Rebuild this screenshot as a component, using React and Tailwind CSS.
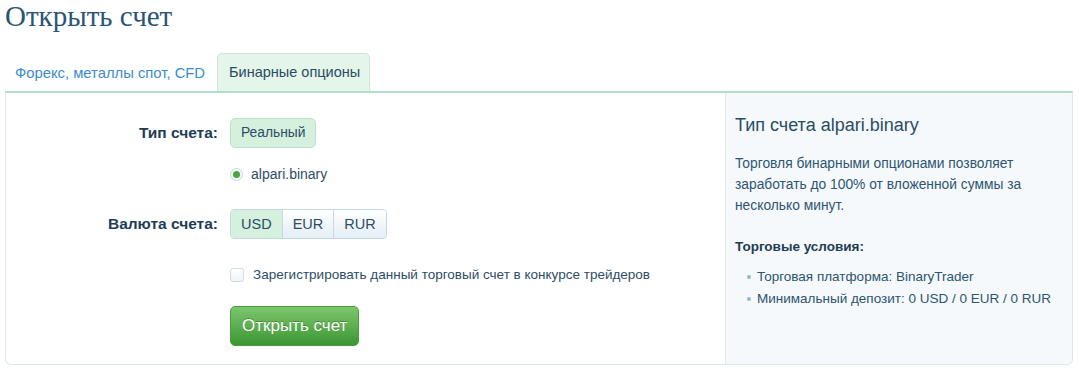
import React, { useState } from 'react';

// --- SMALL PIECES ---
const Radio = () => (
  <span className="w-[13px] h-[13px] rounded-full border border-[#c8d6de] bg-[#f4f8fa] flex items-center justify-center">
    <span className="w-[7px] h-[7px] rounded-full bg-[#4ea340]"></span>
  </span>
);

const Segment = ({ items, value, onChange }) => (
  <div className="flex h-[30px] rounded-[4px] border border-[#c6d9e3] overflow-hidden">
    {items.map((it, i) => (
      <button
        key={it}
        onClick={() => onChange(it)}
        className={
          (value === it
            ? 'bg-[#d5f0dc] '
            : 'bg-gradient-to-b from-[#ffffff] to-[#e3eef4] ') +
          (i > 0 ? 'border-l border-[#c6d9e3] ' : '') +
          'px-[10px] text-[14.5px] text-[#2d4d66] leading-none'
        }
      >
        {it}
      </button>
    ))}
  </div>
);

export default function App() {
  const [currency, setCurrency] = useState('USD');
  const [contest, setContest] = useState(false);

  return (
    <div className="w-[1079px] h-[371px] bg-white overflow-hidden pl-[5px] pr-[6px]" style={{ fontFamily: '"Liberation Sans", Arial, sans-serif' }}>
      {/* Title */}
      <h1 className="text-[29px] leading-[30px] pt-[1px] text-[#2b5576]" style={{ fontFamily: '"Liberation Serif", "Times New Roman", serif' }}>
        Открыть счет
      </h1>

      {/* Tabs */}
      <div className="flex items-end mt-[22px] h-[38px]">
        <div className="pl-[10px] pr-[12px] h-[36px] flex items-center text-[14.8px] text-[#3b8ccc]">
          Форекс, металлы спот, CFD
        </div>
        <div className="h-[38px] pl-[11px] pr-[9px] flex items-center text-[14.5px] text-[#2c4b63] bg-[#e4f5e9] border border-b-0 border-[#cbe8d5] rounded-t-[5px]">
          Бинарные опционы
        </div>
      </div>

      {/* Panel */}
      <div className="flex h-[274px] border-t-2 border-t-[#b4dccd] border-x border-b border-[#dbe8ee] rounded-b-[6px] overflow-hidden">
        {/* Form */}
        <div className="w-[719px] pt-[25px]">
          <div className="grid grid-cols-[212px_1fr] gap-x-[12px] items-center">
            <div className="text-right text-[15.5px] font-bold text-[#1e3c55]">Тип счета:</div>
            <div>
              <div className="inline-flex h-[30px] items-center px-[10px] rounded-[5px] bg-[#d5f0dc] border border-[#bde0c8] text-[13.8px] text-[#2d4d66]">
                Реальный
              </div>
            </div>

            <div></div>
            <div className="flex items-center gap-[8px] mt-[19px] h-[14px]">
              <Radio />
              <span className="text-[14px] text-[#2d4d66]">alpari.binary</span>
            </div>

            <div className="text-right text-[15.5px] font-bold text-[#1e3c55] mt-[28px]">Валюта счета:</div>
            <div className="mt-[28px]">
              <div className="inline-flex">
                <Segment items={['USD', 'EUR', 'RUR']} value={currency} onChange={setCurrency} />
              </div>
            </div>

            <div></div>
            <label className="flex items-center gap-[9px] mt-[28px] h-[16px] cursor-pointer">
              <input type="checkbox" checked={contest} onChange={e => setContest(e.target.checked)} className="sr-only" />
              <span className="w-[14px] h-[14px] rounded-[3px] border border-[#cfdce4] bg-gradient-to-b from-white to-[#eef4f7]"></span>
              <span className="text-[13.5px] text-[#2d4d66]">Зарегистрировать данный торговый счет в конкурсе трейдеров</span>
            </label>

            <div></div>
            <div className="mt-[23px]">
              <button className="h-[40px] px-[11px] rounded-[5px] bg-gradient-to-b from-[#7cc76c] to-[#3b9632] border border-[#4a9e3e] text-white text-[17px] [text-shadow:0_-1px_0_rgba(0,0,0,0.25)]">
                Открыть счет
              </button>
            </div>
          </div>
        </div>

        {/* Sidebar */}
        <div className="flex-1 bg-[#f5f9fc] border-l border-[#dce8ee] pl-[9px] pt-[22px]">
          <div className="text-[18px] text-[#2a4c66] leading-[20px]">Тип счета alpari.binary</div>
          <p className="mt-[18px] text-[13.8px] leading-[21px] text-[#2d5470] w-[320px]">
            Торговля бинарными опционами позволяет заработать до 100% от вложенной суммы за несколько минут.
          </p>
          <div className="mt-[21px] text-[13.5px] font-bold text-[#1e3c55]">Торговые условия:</div>
          <ul className="mt-[9px] pl-[12px] text-[13.5px] leading-[22px] text-[#2d5470]">
            <li className="flex items-center gap-[6px]">
              <span className="w-[4px] h-[4px] rounded-full bg-[#8dbccb]"></span>
              Торговая платформа: BinaryTrader
            </li>
            <li className="flex items-center gap-[6px]">
              <span className="w-[4px] h-[4px] rounded-full bg-[#8dbccb]"></span>
              Минимальный депозит: 0 USD / 0 EUR / 0 RUR
            </li>
          </ul>
        </div>
      </div>
    </div>
  );
}
